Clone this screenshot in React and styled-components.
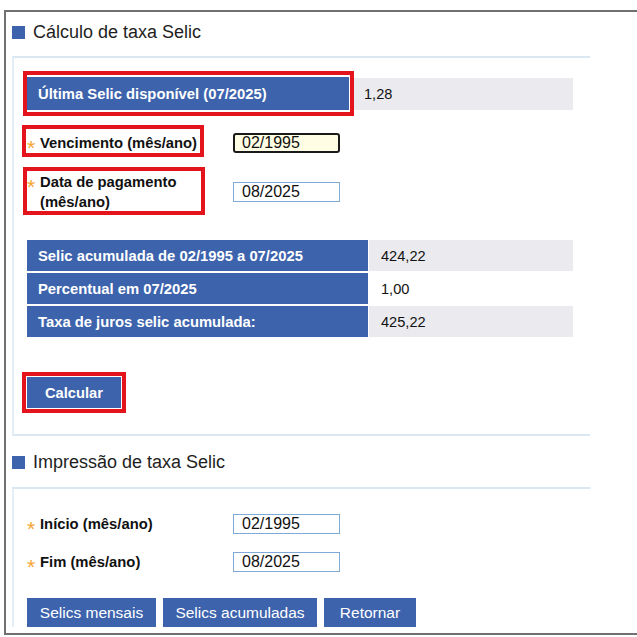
import React from "react";
import styled, { createGlobalStyle } from "styled-components";

const Global = createGlobalStyle`
  html, body { margin: 0; padding: 0; background: #fff; overflow: hidden; }
  body { font-family: "Liberation Sans", Arial, sans-serif; color: #111; }
  * { box-sizing: border-box; }
`;

const BLUE = "#3d63ad";
const RED = "#e3141b";

const Frame = styled.div`
  margin: 10px 0 0 4px;
  width: 700px;
  height: 625px;
  border: 2px solid #707070;
  border-right: none;
  padding-bottom: 6px;
`;

const Clip = styled.div`
  height: 100%;
  overflow: hidden;
  padding-top: 8px;
`;

const SectionTitle = styled.h2`
  display: flex;
  align-items: center;
  gap: 8px;
  margin: ${(p) => p.$top || 0}px 0 0 6px;
  height: 24px;
  font-size: 18px;
  font-weight: normal;
  color: #1e1e1e;
  &::before {
    content: "";
    width: 13px;
    height: 13px;
    background: ${BLUE};
    flex: none;
  }
`;

const Panel = styled.section`
  margin: ${(p) => p.$top}px 0 0 6px;
  width: 578px;
  border-top: 2px solid #d9e7f3;
  border-left: 2px solid #e4eef7;
  border-bottom: ${(p) => (p.$open ? "none" : "2px solid #d9e7f3")};
  padding: ${(p) => p.$pad};
  display: flex;
  flex-direction: column;
  align-items: flex-start;
`;

const Mark = styled.div`
  position: relative;
  justify-self: start;
  margin-top: ${(p) => p.$top || 0}px;
`;

const RedBox = styled.span`
  position: absolute;
  top: ${(p) => p.$t}px;
  left: ${(p) => p.$l}px;
  right: ${(p) => p.$r}px;
  bottom: ${(p) => p.$b}px;
  border: 4.5px solid ${RED};
  pointer-events: none;
`;

const InfoRow = styled.div`
  display: grid;
  grid-template-columns: 322px 219px;
  column-gap: 5px;
  height: 33px;
`;

const HeadCell = styled.div`
  background: ${BLUE};
  color: #fff;
  font-weight: bold;
  font-size: 14.8px;
  display: flex;
  align-items: center;
  padding-left: 11px;
  height: 100%;
`;

const ValueCell = styled.div`
  background: ${(p) => (p.$shade ? "#ebebef" : "#fff")};
  font-size: 14.6px;
  display: flex;
  align-items: center;
  padding-left: ${(p) => p.$pad || 12}px;
  height: ${(p) => p.$h || "100%"};
  align-self: center;
`;

const FieldRow = styled.div`
  display: grid;
  grid-template-columns: 206px 107px;
  align-items: center;
  margin-top: ${(p) => p.$top}px;
`;

const Label = styled.label`
  display: flex;
  align-items: flex-start;
  width: ${(p) => p.$w || "auto"};
  font-weight: bold;
  font-size: 14.8px;
  line-height: 20px;
  color: #111;
  &::before {
    content: "*";
    color: #f5a531;
    font-weight: normal;
    font-size: 21px;
    width: 13px;
    flex: none;
    line-height: 20px;
    position: relative;
    top: 5px;
  }
`;

const Input = styled.input`
  width: 107px;
  height: 20px;
  font-family: "Liberation Sans", Arial, sans-serif;
  font-size: 16px;
  color: #111;
  background: ${(p) => (p.$focus ? "#fffde3" : "#fff")};
  border: ${(p) => (p.$focus ? "2px solid #1a1a1a" : "1px solid #7fa9d6")};
  border-radius: ${(p) => (p.$focus ? "3px" : "0")};
  padding: 0 0 0 ${(p) => (p.$focus ? 7 : 8)}px;
  outline: none;
`;

const Table = styled.div`
  display: grid;
  grid-template-columns: 341px 204px;
  grid-auto-rows: 31px;
  column-gap: 1px;
  row-gap: 2px;
  margin-top: ${(p) => p.$top}px;
`;

const Button = styled.button`
  display: block;
  background: ${BLUE};
  color: #fff;
  border: none;
  font-family: "Liberation Sans", Arial, sans-serif;
  font-size: ${(p) => (p.$bold ? "14.7px" : "15.5px")};
  font-weight: ${(p) => (p.$bold ? "bold" : "normal")};
  height: ${(p) => p.$h || 30}px;
  width: ${(p) => p.$w}px;
  padding: 0;
  cursor: pointer;
`;

const ButtonBar = styled.div`
  display: flex;
  gap: 7px;
  margin-top: ${(p) => p.$top}px;
`;

const rows = [
  ["Selic acumulada de 02/1995 a 07/2025", "424,22", true],
  ["Percentual em 07/2025", "1,00", false],
  ["Taxa de juros selic acumulada:", "425,22", true],
];

export default function App() {
  return (
    <>
      <Global />
      <Frame>
        <Clip>
          <SectionTitle>Cálculo de taxa Selic</SectionTitle>
          <Panel $top={12} $pad="19px 0 26px 13px">
            <Mark>
              <InfoRow>
                <HeadCell>Última Selic disponível (07/2025)</HeadCell>
                <ValueCell $shade $pad={10} $h="32px">1,28</ValueCell>
              </InfoRow>
              <RedBox $t={-6} $l={-4} $r={219} $b={-6} />
            </Mark>

            <FieldRow $top={23}>
              <Mark>
                <Label>Vencimento (mês/ano)</Label>
                <RedBox $t={-8} $l={-5} $r={-7} $b={-4} />
              </Mark>
              <Input $focus defaultValue="02/1995" />
            </FieldRow>

            <FieldRow $top={19}>
              <Mark>
                <Label $w="172px">Data de pagamento (mês/ano)</Label>
                <RedBox $t={-5} $l={-4} $r={-6} $b={-3} />
              </Mark>
              <Input defaultValue="08/2025" />
            </FieldRow>

            <Table $top={28}>
              {rows.map(([l, v, s]) => (
                <React.Fragment key={l}>
                  <HeadCell>{l}</HeadCell>
                  <ValueCell $shade={s}>{v}</ValueCell>
                </React.Fragment>
              ))}
            </Table>

            <Mark $top={40}>
              <Button $bold $w={94} $h={31}>Calcular</Button>
              <RedBox $t={-5} $l={-5} $r={-5} $b={-5} />
            </Mark>
          </Panel>

          <SectionTitle $top={14}>Impressão de taxa Selic</SectionTitle>
          <Panel $top={13} $pad="25px 0 0 13px" $open>
            <FieldRow $top={0}>
              <Label>Início (mês/ano)</Label>
              <Input defaultValue="02/1995" />
            </FieldRow>
            <FieldRow $top={18}>
              <Label>Fim (mês/ano)</Label>
              <Input defaultValue="08/2025" />
            </FieldRow>
            <ButtonBar $top={26}>
              <Button $w={129}>Selics mensais</Button>
              <Button $w={154}>Selics acumuladas</Button>
              <Button $w={92}>Retornar</Button>
            </ButtonBar>
          </Panel>
        </Clip>
      </Frame>
    </>
  );
}
